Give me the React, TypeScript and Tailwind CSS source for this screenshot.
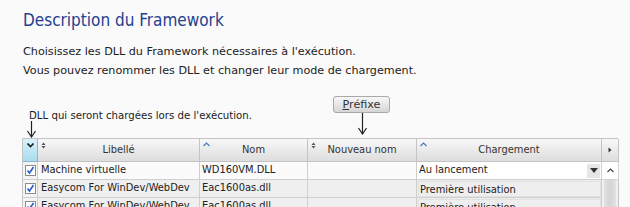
import React from "react";

const SANS = { fontFamily: '"DejaVu Sans", Tahoma, Verdana, sans-serif' };
const COND = { fontFamily: '"DejaVu Sans Condensed", "DejaVu Sans", Tahoma, sans-serif' };

type Row = { libelle: string; nom: string; nouveau: string; chargement: string };

const rows: Row[] = [
  { libelle: "Machine virtuelle", nom: "WD160VM.DLL", nouveau: "", chargement: "Au lancement" },
  { libelle: "Easycom For WinDev/WebDev", nom: "Eac1600as.dll", nouveau: "", chargement: "Première utilisation" },
  { libelle: "Easycom For WinDev/WebDev", nom: "Eac1600as.dll", nouveau: "", chargement: "Première utilisation" },
];

function SortBoth() {
  return (
    <svg width="5" height="7" viewBox="0 0 5 7" className="absolute left-[3px] top-[3px]">
      <path d="M0.5 3 L2.5 0.5 L4.5 3 Z M0.5 4 L2.5 6.5 L4.5 4 Z" fill="#555" />
    </svg>
  );
}

function SortUp() {
  return (
    <svg width="7" height="5" viewBox="0 0 7 5" className="absolute left-[3px] top-[3px]">
      <path d="M0.5 4 L3.5 1 L6.5 4" fill="none" stroke="#4a7ab8" strokeWidth="1.2" />
    </svg>
  );
}

function Check() {
  return (
    <div className="w-[11px] h-[11px] border border-[#8d8d8d] bg-white flex items-center justify-center">
      <svg width="9" height="9" viewBox="0 0 9 9">
        <path d="M1.5 4.5 L3.5 7 L7.5 1" fill="none" stroke="#2f5fc4" strokeWidth="1.7" />
      </svg>
    </div>
  );
}

function Arrow({ height }: { height: number }) {
  return (
    <svg width="11" height={height} viewBox={`0 0 11 ${height}`}>
      <path d={`M5.5 0 L5.5 ${height - 1}`} stroke="#222" strokeWidth="1.2" />
      <path d={`M1.5 ${height - 7} L5.5 ${height - 1} L9.5 ${height - 7}`} fill="none" stroke="#222" strokeWidth="1.2" />
    </svg>
  );
}

const COLS = "grid grid-cols-[15px_162px_108px_109px_185px_17px]";

export default function App() {
  return (
    <div className="w-[630px] h-[207px] overflow-hidden bg-[#fafafa] text-[#222]" style={SANS}>
      <div className="pl-[23px] pt-[8px]">
        <h1 className="text-[17px] leading-[24px] text-[#22408f]" style={COND}>
          Description du Framework
        </h1>
        <p className="mt-[10px] text-[11.2px] leading-[19px]">
          Choisissez les DLL du Framework nécessaires à l'exécution.
        </p>
        <p className="text-[11.2px] leading-[19px]">
          Vous pouvez renommer les DLL et changer leur mode de chargement.
        </p>
      </div>

      <div className="relative mt-[14px] h-[44px]">
        <div className="absolute left-[29px] top-[15px] text-[10.2px] leading-[13px]">
          DLL qui seront chargées lors de l'exécution.
        </div>
        <div className="absolute left-[26px] top-[27px]">
          <Arrow height={17} />
        </div>
        <div className="absolute left-[333px] top-[2px] w-[57px] h-[17px] rounded-[3px] border border-[#a9a9a9] bg-gradient-to-b from-[#f7f7f7] to-[#d6d6d6] text-[11.2px] leading-[15px] text-center text-[#333]">
          <span className="underline">P</span>réfixe
        </div>
        <div className="absolute left-[357px] top-[19px]">
          <Arrow height={22} />
        </div>
      </div>

      <div className="ml-[22px] w-[596px] border-l border-t border-[#c4c4c4] text-[11px]" style={COND}>
        <div className={`${COLS} h-[23px] bg-gradient-to-b from-[#f8f8f8] to-[#dcdcdc] text-[#333]`}>
          <div className="relative border-r border-b border-[#8fb6cf] bg-gradient-to-b from-[#d9f1fb] to-[#a8dcef]">
            <svg width="7" height="5" viewBox="0 0 7 5" className="absolute left-[4px] top-[4px]">
              <path d="M0.5 0.5 L3.5 3.5 L6.5 0.5" fill="none" stroke="#222" strokeWidth="1.6" />
            </svg>
          </div>
          <div className="relative border-r border-b border-[#c4c4c4] flex items-end justify-center pb-[3px]">
            <SortBoth />
            Libellé
          </div>
          <div className="relative border-r border-b border-[#c4c4c4] flex items-end justify-center pb-[3px]">
            <SortUp />
            Nom
          </div>
          <div className="relative border-r border-b border-[#c4c4c4] flex items-end justify-center pb-[3px]">
            <SortBoth />
            Nouveau nom
          </div>
          <div className="relative border-r border-b border-[#c4c4c4] flex items-end justify-center pb-[3px]">
            <SortUp />
            Chargement
          </div>
          <div className="relative border-r border-b border-[#c4c4c4] flex items-center justify-center">
            <svg width="4" height="6" viewBox="0 0 4 6">
              <path d="M0.5 0.5 L3.5 3 L0.5 5.5 Z" fill="#333" />
            </svg>
          </div>
        </div>

        {rows.map((r, i) => (
          <div key={i} className={`${COLS} h-[18px] ${i === 0 ? "bg-[#fbfbfb]" : "bg-[#efefef]"}`}>
            <div className="border-r border-b border-[#cfcfcf] flex items-center justify-center bg-[#f4f4f4]">
              <Check />
            </div>
            <div className="border-r border-b border-[#cfcfcf] flex items-center pl-[3px] whitespace-nowrap overflow-hidden">
              {r.libelle}
            </div>
            <div className="border-r border-b border-[#cfcfcf] flex items-center pl-[2px] whitespace-nowrap overflow-hidden">
              {r.nom}
            </div>
            <div className="border-r border-b border-[#cfcfcf]">{r.nouveau}</div>
            {i === 0 ? (
              <div className="border-r border-b border-[#cfcfcf] flex items-center justify-between pl-[2px] bg-white">
                <span>{r.chargement}</span>
                <span className="h-[14px] w-[13px] mr-[1px] bg-[#e6e6e6] flex items-center justify-center">
                  <svg width="8" height="5" viewBox="0 0 8 5">
                    <path d="M0 0 L8 0 L4 5 Z" fill="#333" />
                  </svg>
                </span>
              </div>
            ) : (
              <div className="border-r border-b border-[#cfcfcf] flex items-center pl-[1px] bg-[#ececec]">
                <span className="flex-1 h-[16px] leading-[15px] pl-[1px] border border-[#e2e2e2] bg-[#eeeeee]">
                  {r.chargement}
                </span>
              </div>
            )}
            {i === 0 ? (
              <div className="border-r border-b border-[#d4d4d4] flex items-center justify-center bg-white">
                <svg width="7" height="5" viewBox="0 0 7 5">
                  <path d="M0.5 4 L3.5 1 L6.5 4" fill="none" stroke="#444" strokeWidth="1.2" />
                </svg>
              </div>
            ) : (
              <div className="border-r border-[#c4c4c4] flex justify-center bg-[#f0f0f0]">
                <div className="w-[12px] h-full bg-gradient-to-r from-[#e2e2e2] via-[#d4d4d4] to-[#e2e2e2]" />
              </div>
            )}
          </div>
        ))}
      </div>
    </div>
  );
}
